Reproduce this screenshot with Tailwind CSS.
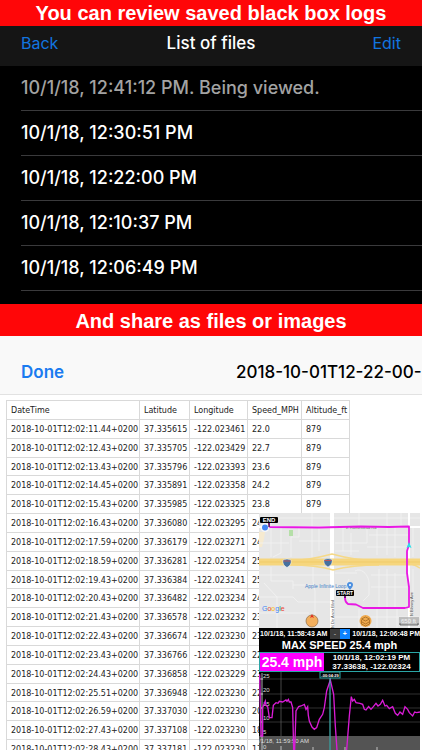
<!DOCTYPE html>
<html lang="en">
<head>
    <meta charset="UTF-8">
    <meta name="viewport" content="width=device-width, initial-scale=1.0">
    <title>Black box logs</title>
    <script src="https://cdn.jsdelivr.net/npm/@tailwindcss/browser@4"></script>
</head>
<body class="h-screen flex flex-col overflow-hidden bg-white font-['Inter',sans-serif]">

    <h1 class="h-[26px] shrink-0 bg-[#ff0608] text-white text-center font-bold text-xl leading-[26px] font-['Liberation_Sans',sans-serif] whitespace-nowrap">You can review saved black box logs</h1>

    <!-- Saved files -->
    <section class="shrink-0 bg-black text-white pb-[13px]">
        <header class="h-10 grid grid-cols-3 items-center px-[21px] pb-1.5 bg-[#151515] text-base leading-5">
            <button class="justify-self-start text-[#1275e0]">Back</button>
            <h2 class="text-center font-medium text-[17px] whitespace-nowrap">List of files</h2>
            <button class="justify-self-end text-[#1275e0]">Edit</button>
        </header>
        <ul class="pl-[21px] text-lg font-medium">
            <li class="h-[45px] flex items-center border-b border-[#3a3a3c] text-[#a3a3a3]">10/1/18, 12:41:12 PM. Being viewed.</li>
            <li class="h-[45px] flex items-center border-b border-[#3a3a3c]">10/1/18, 12:30:51 PM</li>
            <li class="h-[45px] flex items-center border-b border-[#3a3a3c]">10/1/18, 12:22:00 PM</li>
            <li class="h-[45px] flex items-center border-b border-[#3a3a3c]">10/1/18, 12:10:37 PM</li>
            <li class="h-[45px] flex items-center border-b border-[#3a3a3c]">10/1/18, 12:06:49 PM</li>
        </ul>
    </section>

    <h1 class="h-8 shrink-0 bg-[#ff0608] text-white text-center font-bold text-xl leading-[34px] font-['Liberation_Sans',sans-serif] whitespace-nowrap">And share as files or images</h1>

    <!-- File preview -->
    <header class="h-[59px] shrink-0 flex items-center pt-4 px-[21px] bg-[#f9f9f9] border-b border-[#e2e2e2] overflow-hidden">
        <button class="w-[215px] shrink-0 text-left text-[17px] font-semibold text-[#1a7bf0]">Done</button>
        <h2 class="text-[17px] font-medium text-black whitespace-nowrap">2018-10-01T12-22-00-</h2>
    </header>

    <main class="relative flex-1 min-h-0 overflow-hidden pt-[5px] pl-[6px]">
        <table class="h-[359px] w-[344px] table-fixed border-collapse text-left text-[8px] leading-[10px] text-[#222] font-['DejaVu_Sans',sans-serif] whitespace-nowrap [&_td]:border [&_td]:border-[#d9d9d9] [&_td]:px-[4px] [&_td]:pt-[2px] [&_th]:border [&_th]:border-[#d9d9d9] [&_th]:px-[4px] [&_th]:pt-[2px] [&_th]:font-normal">
            <thead>
                <tr class="h-[19px]"><th class="w-[133px]">DateTime</th><th class="w-[50px]">Latitude</th><th class="w-[58px]">Longitude</th><th class="w-[54px]">Speed_MPH</th><th>Altitude_ft</th></tr>
            </thead>
            <tbody>
                <tr><td>2018-10-01T12:02:11.44+0200</td><td>37.335615</td><td>-122.023461</td><td>22.0</td><td>879</td></tr>
                <tr><td>2018-10-01T12:02:12.43+0200</td><td>37.335705</td><td>-122.023429</td><td>22.7</td><td>879</td></tr>
                <tr><td>2018-10-01T12:02:13.43+0200</td><td>37.335796</td><td>-122.023393</td><td>23.6</td><td>879</td></tr>
                <tr><td>2018-10-01T12:02:14.45+0200</td><td>37.335891</td><td>-122.023358</td><td>24.2</td><td>879</td></tr>
                <tr><td>2018-10-01T12:02:15.43+0200</td><td>37.335985</td><td>-122.023325</td><td>23.8</td><td>879</td></tr>
                <tr><td>2018-10-01T12:02:16.43+0200</td><td>37.336080</td><td>-122.023295</td><td>24</td><td></td></tr>
                <tr><td>2018-10-01T12:02:17.59+0200</td><td>37.336179</td><td>-122.023271</td><td>24</td><td></td></tr>
                <tr><td>2018-10-01T12:02:18.59+0200</td><td>37.336281</td><td>-122.023254</td><td>25</td><td></td></tr>
                <tr><td>2018-10-01T12:02:19.43+0200</td><td>37.336384</td><td>-122.023241</td><td>25</td><td></td></tr>
                <tr><td>2018-10-01T12:02:20.43+0200</td><td>37.336482</td><td>-122.023234</td><td>24</td><td></td></tr>
                <tr><td>2018-10-01T12:02:21.43+0200</td><td>37.336578</td><td>-122.023232</td><td>23</td><td></td></tr>
                <tr><td>2018-10-01T12:02:22.43+0200</td><td>37.336674</td><td>-122.023230</td><td>23</td><td></td></tr>
                <tr><td>2018-10-01T12:02:23.43+0200</td><td>37.336766</td><td>-122.023230</td><td>22</td><td></td></tr>
                <tr><td>2018-10-01T12:02:24.43+0200</td><td>37.336858</td><td>-122.023229</td><td>23</td><td></td></tr>
                <tr><td>2018-10-01T12:02:25.51+0200</td><td>37.336948</td><td>-122.023230</td><td>22</td><td></td></tr>
                <tr><td>2018-10-01T12:02:26.59+0200</td><td>37.337030</td><td>-122.023230</td><td>20</td><td></td></tr>
                <tr><td>2018-10-01T12:02:27.43+0200</td><td>37.337108</td><td>-122.023230</td><td>18</td><td></td></tr>
                <tr><td>2018-10-01T12:02:28.43+0200</td><td>37.337181</td><td>-122.023230</td><td>17</td><td></td></tr>
            </tbody>
        </table>

        <!-- Shared image lying over the table -->
        <aside class="absolute right-[2px] bottom-0 w-[161px] bg-black text-white font-['Liberation_Sans',sans-serif] font-bold">
            <svg class="block w-full" viewBox="0 0 161 115" fill="none">
                <rect width="161" height="115" fill="#e6e6e6"/>
                <path d="M0 19h6l-1 7-2 8H0z" fill="#f6ead0"/>
                <rect x="30" y="17" width="4" height="6" fill="#b5dfa8"/>
                <!-- side streets -->
                <g stroke="#f3f3f3" stroke-width=".8">
                    <path d="M0 5h161M12 0v44M22 14v26l-8 4M40 14v10h-8v20M53 0v45M0 30h30M40 28h33M60 14v24M76 30h32v-16M84 14v24M92 20v22M100 0v12M118 14v28M110 22h40M128 0v42M136 14v30M142 0v12M76 38h24M108 34h42M154 14v30"/>
                    <path d="M0 62h73M12 54v14h22v8M54 54v14l2 10v32M34 72h20M0 84h34l5 5h34M0 100h50M18 84v31M5 70l13 14M76 60h22M90 66c-4 8-4 16 2 22M96 58c8-4 14 6 14 12v12l-6 6M120 56v38M128 56v38M136 60v34M112 62h36M112 74h36M76 104h85M100 96v19M118 96v19M128 96v19M138 96v19M154 56v40"/>
                </g>
                <path d="M0 14h161M150 0v115" stroke="#fff" stroke-width="2"/>
                <path d="M73 0v115" stroke="#fff" stroke-width="4"/>
                <!-- freeway -->
                <path d="M26 48c20 0 36-4 47-7 14 4 28 7 50 7M30 52c20 0 34 2 44 5 12-3 26-5 46-5M146 50c6 0 10 2 15 5" stroke="#f5d988" stroke-width="1.500"/>
                <path d="M0 49h161" stroke="#f6d67e" stroke-width="7"/>
                <path d="M0 49h161" stroke="#f0cb68"/>
                <g fill="#46709f" stroke="#fff" stroke-width=".5">
                    <path d="M24 47q4-2 8 0 1 5-4 7.500-5-2.500-4-7.500zM65 46.500q4-2 8 0 1 5-4 7.500-5-2.500-4-7.500z"/>
                </g>
                <path d="M24.500 48h7M65.500 47.500h7" stroke="#b8545c"/>
                <text x="87" y="16" font-size="4" font-weight="400" fill="#666">E Homestead Rd</text>
                <text transform="translate(75 115) rotate(-90)" font-size="4" font-weight="400" fill="#555">N De Anza Blvd</text>
                <text transform="translate(154 103) rotate(-90)" font-size="4" font-weight="400" fill="#555">N Blaney Ave</text>
                <!-- recorded route -->
                <path d="M10 10v4l50 .5 42-1 28 .5 20-.500V32l-2 6v22l2 14v20l-4 1h-42l-7-3.500-8-.5q-3-2-3-6v-6" stroke="#e818e4" stroke-width="1.800" stroke-linejoin="round"/>
                <path d="M150 29l2.500 6-2.500-1-2.500 1z" fill="#25e1ec"/>
                <circle cx="6" cy="14.500" r="4.500" fill="#fff" fill-opacity=".7"/>
                <circle cx="6" cy="14.500" r="3" fill="#4285f4"/>
                <path d="M10 10v4M86 80v5" stroke="#000"/>
                <rect x="1" y="4" width="18" height="6" rx="1" fill="#000"/>
                <text x="10" y="9" font-size="6" fill="#fff" text-anchor="middle">END</text>
                <rect x="77" y="77" width="18" height="6" rx="1" fill="#000"/>
                <text x="86" y="82" font-size="5" fill="#fff" text-anchor="middle">START</text>
                <text x="46" y="75" font-size="5" font-weight="400" fill="#3f80c8">Apple Infinite Loop</text>
                <path d="M91 77q-3-3-3-5a3 3 0 0 1 6 0q0 2-3 5z" fill="#4b8fe0"/>
                <circle cx="91" cy="72" r="1" fill="#fff"/>
                <text x="3" y="98" font-size="7" font-weight="400"><tspan fill="#4285f4">G</tspan><tspan fill="#ea4335">o</tspan><tspan fill="#fbbc05">o</tspan><tspan fill="#4285f4">g</tspan><tspan fill="#34a853">l</tspan><tspan fill="#ea4335">e</tspan></text>
                <!-- compass and layer controls -->
                <circle cx="53" cy="108" r="6" fill="#f2ae5c" stroke="#8d6b45" stroke-width=".7"/>
                <path d="M53 101l2 4-2-1-2 1z" fill="#e02b20"/>
                <circle cx="106.500" cy="108" r="6" fill="#efa94d"/>
                <path d="M102.500 106l4-2 4 2-4 2zM102.500 107v4l4 2 4-2v-4M103 109l3.500 2 3.500-2" stroke="#a36b24" stroke-width=".8"/>
                <rect x="140" y="104" width="20" height="8" fill="#999" fill-opacity=".55"/>
                <text x="142" y="110" font-size="6" font-weight="400" fill="#f5f5f5">650 ft</text>
                <path d="M141 110v2h18v-2" stroke="#444" stroke-width=".7"/>
            </svg>

            <div class="h-[11px] flex items-center justify-between text-[7px] leading-[10px] whitespace-nowrap pl-px">
                <span>10/1/18, 11:58:43 AM</span>
                <span class="flex">
                    <button class="w-[10px] h-[10px] leading-[9px] bg-[#3c3c3c] text-[#999]">-</button>
                    <button class="w-[10px] h-[10px] leading-[9px] bg-[#0d83fe]">+</button>
                </span>
                <span>10/1/18, 12:06:48 PM</span>
            </div>
            <p class="h-[13px] text-center text-[11px] leading-[13px]">MAX SPEED 25.4 mph</p>
            <div class="h-5 flex border border-[#2ba5a5]">
                <strong class="w-16 shrink-0 bg-[#ff00ff] text-[14px] leading-[18px] text-center whitespace-nowrap">25.4 mph</strong>
                <p class="flex-1 text-center text-[8px] leading-[9px] whitespace-nowrap">10/1/18, 12:02:19 PM<br>37.33638, -122.02324</p>
            </div>

            <!-- Speed chart -->
            <svg class="block w-full" viewBox="0 0 161 78" fill="none">
                <path d="M0 7h161M0 22h161M0 36h161M0 50h161" stroke="#454545" stroke-width=".7"/>
                <path d="M22 0v64M71 0v64" stroke="#666" stroke-width=".7"/>
                <rect y="64" width="161" height="14" fill="#545454"/>
                <g fill="#ddd" font-size="6" font-weight="400">
                    <text x="4" y="6">25</text><text x="4" y="20">20</text><text x="4" y="34">15</text><text x="4" y="48">10</text><text x="4" y="62">5</text><text x="4" y="77">0</text>
                    <text x="0" y="71">/1/18, 11:59:50 AM</text>
                </g>
                <path d="M3 1v77M1 7h3M1 22h3M1 36h3M1 50h3M1 64h3M22 74v4M54 75v3M86 75v3M118 75v3" stroke="#ddd" stroke-width=".8"/>
                <g transform="translate(-3 -6) scale(.3333)">
                    <path d="M11 25L13 120 15 210 20 210 20 125 28 105 30 118 35 122 40 155 48 155 52 118 60 110 66 112 70 106 80 108 90 102 93 106 97 100 100 108 105 108 110 125 113 252M116 252L120 135 128 122 135 120 145 115 150 130 155 122 157 148 160 165 168 183 175 190 182 185 190 160 200 145 205 125 212 75 223 42 233 85 238 180 243 252M272 252L280 150 286 92 290 105 295 100 300 110 312 112 320 115 325 130 330 132 338 122 345 130 352 122 360 112 366 120 373 115 380 103 387 120 392 118 400 128 410 122 418 142 425 148 432 138 440 145 447 122 455 130 460 140 470 150 476 138 482 140 492 138" stroke="#d91bd6" stroke-width="4"/>
                </g>
                <path d="M71 5v73" stroke="#2fb5b5"/>
                <rect x="61" y="0" width="20" height="6" fill="#000" stroke="#2ba5a5"/>
                <text x="71" y="5" font-size="4" fill="#fff" text-anchor="middle">-00:04:29</text>
            </svg>
        </aside>
    </main>
</body>
</html>
